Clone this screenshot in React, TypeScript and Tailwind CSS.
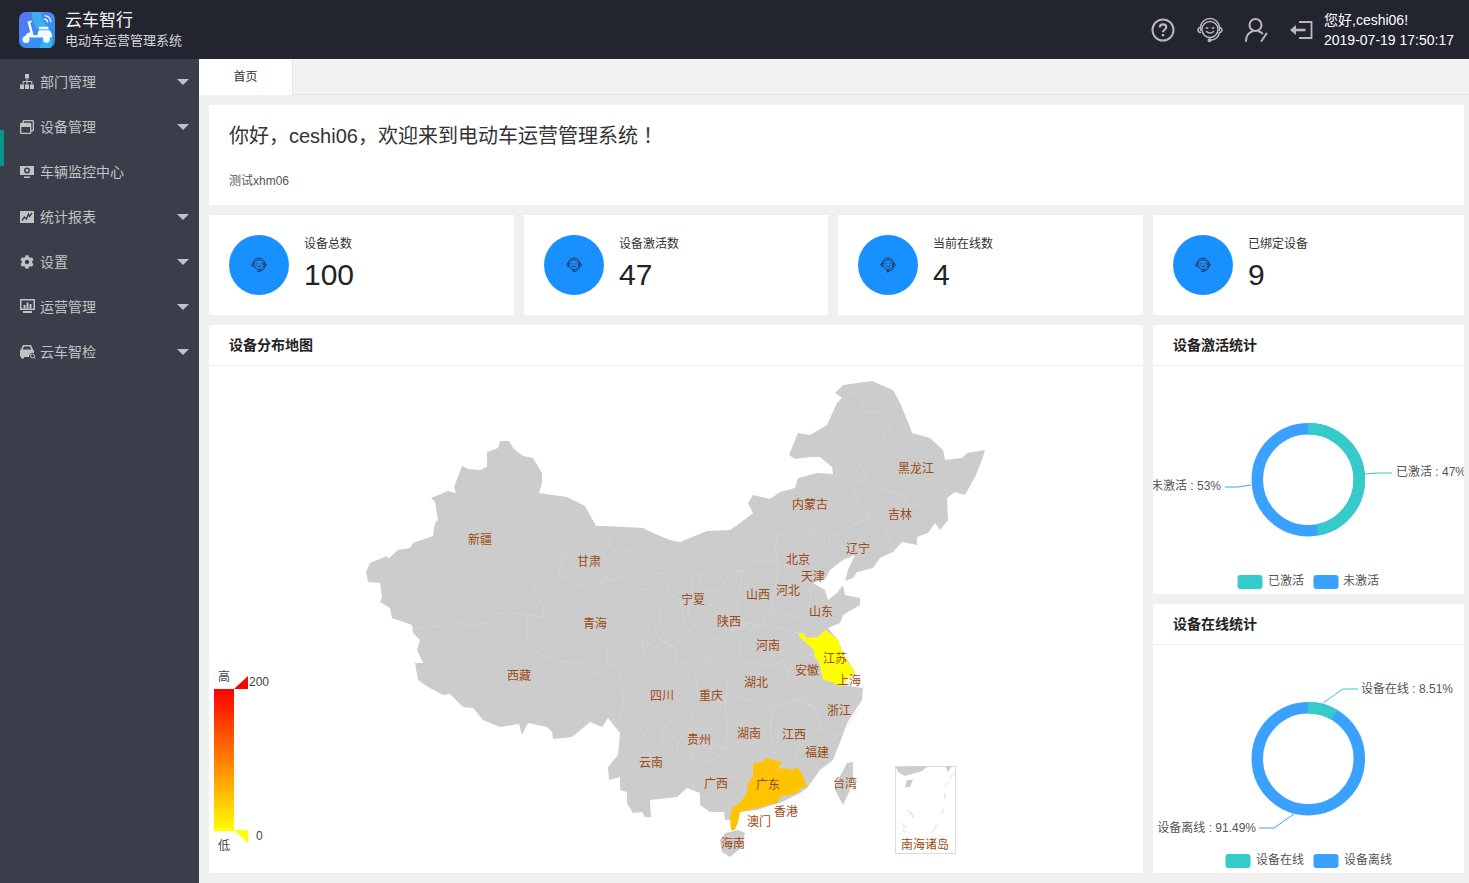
import { FaCog, FaRegWindowRestore } from 'react-icons/fa';
import type { ReactNode } from 'react';

// ---------- icons ----------
function HeadsetIcon({ className }: { className?: string }) {
  return (
    <svg className={className} viewBox="0 0 26 26" fill="none" stroke="currentColor" strokeWidth="1.5" strokeLinecap="round">
      <circle cx="13" cy="12.5" r="8" />
      <path d="M3.6 13.5V10.5C3.6 5.6 7.8 1.6 13 1.6s9.4 4 9.4 8.9v3" />
      <path d="M3.6 10.2c-1.7.3-2.6 1.4-2.6 2.7s1 2.4 2.6 2.6M22.4 10.2c1.7.3 2.6 1.4 2.6 2.7s-1 2.4-2.6 2.6" />
      <path d="M22.4 15.5c-.3 4.4-4 7.2-8 7.6" />
      <circle cx="12.6" cy="23.2" r="1.3" fill="currentColor" />
      <path d="M9.2 11h1.6M15.2 11h1.6M9.5 14.6c1.8 2 5.2 2 7 0" />
    </svg>
  );
}

function UserCheckIcon({ className }: { className?: string }) {
  return (
    <svg className={className} viewBox="0 0 24 26" fill="none" stroke="currentColor" strokeWidth="2" strokeLinecap="round">
      <circle cx="10.5" cy="8" r="6" />
      <path d="M1 24c0-5.500 3-8.500 6.500-9.800M13.500 14.300c1.500.5 2.800 1.200 3.800 2.200" />
      <path d="M16.500 24l5-7.500" />
    </svg>
  );
}

function LogoutIcon({ className }: { className?: string }) {
  return (
    <svg className={className} viewBox="0 0 24 20" fill="none" stroke="currentColor" strokeWidth="1.8">
      <path d="M10 2h12.500v16H10" />
      <path d="M1 10l6-5v10z" fill="currentColor" stroke="none" />
      <path d="M7 8.700h9.500v2.600H7z" fill="currentColor" stroke="none" />
    </svg>
  );
}

function Logo() {
  return (
    <svg className="w-9 h-9 shrink-0" viewBox="0 0 36 36">
      <defs>
        <linearGradient id="logoBg" x1="0" y1="0" x2="1" y2="1">
          <stop offset="0" stopColor="#5f6ef2" />
          <stop offset="0.6" stopColor="#3b8ff3" />
          <stop offset="1" stopColor="#2a86ea" />
        </linearGradient>
      </defs>
      <rect width="36" height="36" rx="7" fill="url(#logoBg)" />
      <path d="M13 0h10c-1 7 3 11 7 16 4 6 5 13 2 20H20c4-6 3-12-1-18C15 13 12 7 13 0z" fill="#38c0ee" opacity="0.7" />
      <path d="M8.500 9.500l4-1 .6 1.500-1.800.6 3.200 12.400 4 .2c.2-2 .6-3.600 1.500-5h10c2 1 3 3.300 3 6.500l-1.500.8H9.500c-1.500 0-2.800.4-4 1.500.2-3.500 2.200-6 5.700-6.700z" fill="#fff" opacity="0.95" />
      <rect x="20" y="14.800" width="9.500" height="2.400" rx="1.200" fill="#fff" />
      <circle cx="7" cy="27.500" r="3.500" fill="#fff" />
      <circle cx="27.500" cy="27.500" r="3.300" fill="#fff" />
      <path d="M25 6.800c2 .2 3.500 1.600 3.800 3.600M25.500 3.600c3.500.4 6 3 6.500 6.500" fill="none" stroke="#fff" strokeWidth="1.300" />
    </svg>
  );
}

function SitemapIcon() {
  return (
    <svg className="w-[14px] h-[15px]" viewBox="0 0 14 15" fill="#c2c2c2">
      <path d="M5 0h4v4.500H5zM0 10.500h4V15H0zM5 10.500h4V15H5zM10 10.500h4V15h-4z" />
      <path d="M6.500 4.500h1v2.500h4.800v3.500h-1V8H7.500v2.500h-1V8H3.700v2.500h-1V7h3.800z" />
    </svg>
  );
}

function ScreenCamIcon() {
  return (
    <svg className="w-[14px] h-[14px]" viewBox="0 0 14 14">
      <path d="M0 1h14v9H0z" fill="#c2c2c2" />
      <circle cx="7" cy="5.500" r="3" fill="#3a3e4b" />
      <circle cx="7" cy="5.500" r="1.400" fill="#c2c2c2" />
      <path d="M4 11.500h6V13H4z" fill="#c2c2c2" />
    </svg>
  );
}

function ReportIcon() {
  return (
    <svg className="w-[14px] h-[14px]" viewBox="0 0 14 14">
      <path d="M0 1h14v12H0z" fill="#c2c2c2" />
      <path d="M2 10.500l2.500-3.500 2 2 2-5 1 2.500L12 3" fill="none" stroke="#3a3e4b" strokeWidth="1.300" />
    </svg>
  );
}

function MonitorBarsIcon() {
  return (
    <svg className="w-[15px] h-[15px]" viewBox="0 0 15 15">
      <path d="M0 0h15v11H0z" fill="#c2c2c2" />
      <path d="M1.500 1.500h12v8h-12z" fill="#3a3e4b" />
      <path d="M3.500 6h2v3.500h-2zM6.500 3.500h2v6h-2zM9.500 5h2v4.500h-2z" fill="#c2c2c2" />
      <path d="M3 12h9v2H3z" fill="#c2c2c2" />
    </svg>
  );
}

function CarSearchIcon() {
  return (
    <svg className="w-4 h-[15px]" viewBox="0 0 16 15">
      <path d="M3 1h8l2 4.500c.8.3 1 1 1 1.800V9a4 4 0 0 0-5 4H4v1.500H1V13L0 12V7.300c0-.8.300-1.500 1-1.800z" fill="#c2c2c2" />
      <path d="M4 2.500h6l1.200 3H2.800z" fill="#3a3e4b" />
      <circle cx="12.500" cy="12" r="2" fill="none" stroke="#c2c2c2" strokeWidth="1" />
      <path d="M14 13.500l1.500 1.300" stroke="#c2c2c2" strokeWidth="1" />
    </svg>
  );
}

// ---------- sidebar ----------
interface MenuItem {
  label: string;
  icon: ReactNode;
  caret: boolean;
}

const menu: MenuItem[] = [
  { label: '部门管理', icon: <SitemapIcon />, caret: true },
  { label: '设备管理', icon: <FaRegWindowRestore className="w-[14px] h-[14px]" />, caret: true },
  { label: '车辆监控中心', icon: <ScreenCamIcon />, caret: false },
  { label: '统计报表', icon: <ReportIcon />, caret: true },
  { label: '设置', icon: <FaCog className="w-[14px] h-[14px]" />, caret: true },
  { label: '运营管理', icon: <MonitorBarsIcon />, caret: true },
  { label: '云车智检', icon: <CarSearchIcon />, caret: true },
];

function Sidebar() {
  return (
    <aside className="relative w-[199px] shrink-0 bg-[#3a3e4b] text-[#c2c2c2]">
      <div className="absolute left-0 top-[71px] w-1 h-9 bg-[#009688]" />
      {menu.map((item) => (
        <div key={item.label} className="flex items-center h-[45px] pl-[20px] pr-[10px] text-sm">
          <span className="w-[20px] flex items-center">{item.icon}</span>
          <span className="flex-1">{item.label}</span>
          {item.caret && (
            <span className="w-0 h-0 border-x-[6px] border-x-transparent border-t-[6px] border-t-[#c2c2c2]" />
          )}
        </div>
      ))}
    </aside>
  );
}

// ---------- stat cards ----------
function StatCard({ label, value, className }: { label: string; value: number; className: string }) {
  return (
    <div className={`flex items-center h-[100px] bg-white pl-5 ${className}`}>
      <div className="flex items-center justify-center w-[60px] h-[60px] rounded-full bg-[#1890ff] text-[#1c3557]">
        <HeadsetIcon className="w-4 h-4" />
      </div>
      <div className="ml-[15px] pb-[2px]">
        <div className="text-xs leading-4 text-[#333]">{label}</div>
        <div className="mt-[5px] text-[30px] leading-9 text-[#222]">{value}</div>
      </div>
    </div>
  );
}

function CardTitle({ children }: { children: ReactNode }) {
  return (
    <div className="flex items-center h-[41px] px-5 border-b border-[#f0f0f0] text-sm font-bold text-[#222]">
      {children}
    </div>
  );
}

// ---------- map ----------
const CHINA =
  '366,572 370,563 387,556 388,559 398,550 410,548 413,543 433,536 435,523 438,520 435,502 431,498 448,491 456,493 454,487 462,466 468,469 480,470 487,467 487,452 498,448 500,441 509,441 513,448 523,456 533,458 542,473 542,483 539,493 567,497 585,506 596,526 605,526 643,528 653,533 670,540 680,542 707,531 730,530 740,523 753,513 748,503 753,495 770,499 780,492 795,488 798,478 817,473 833,474 832,467 820,457 810,457 795,459 789,455 798,433 810,435 827,425 837,403 842,398 835,393 843,385 872,381 893,390 900,403 910,427 912,433 930,438 943,450 945,460 962,458 967,453 985,450 982,460 975,477 965,495 955,492 947,498 948,520 940,530 935,523 928,533 917,537 917,545 902,542 893,552 880,558 873,568 857,572 853,578 845,581 848,570 855,555 843,560 830,570 826,578 813,583 825,590 828,600 837,593 843,585 845,595 860,598 860,605 843,615 840,623 828,628 838,640 843,653 855,672 842,685 863,688 862,700 847,723 842,737 833,760 820,770 807,788 800,793 780,803 772,805 757,810 740,812 732,810 730,820 725,820 724,812 710,812 700,805 700,793 687,788 677,797 650,800 651,817 645,817 642,812 633,813 627,803 627,792 620,790 620,777 609,780 608,767 618,755 620,733 608,718 602,727 590,722 572,737 553,739 552,732 547,727 528,723 522,735 519,724 500,727 483,720 473,708 463,707 450,694 443,695 428,687 418,680 415,663 423,663 417,650 420,640 413,633 412,625 392,618 390,608 380,602 382,597 380,583 368,582';

const JIANGSU =
  '798,633 803,633 807,638 818,637 825,630 832,635 838,640 843,655 855,672 845,682 840,687 833,682 823,680 822,675 820,665 818,660 815,658 814,650 805,642 800,637';

const GUANGDONG =
  '755,763 763,762 765,758 782,762 777,770 782,768 792,770 797,767 803,775 807,788 800,788 798,793 780,797 777,803 772,804 757,808 740,812 738,822 735,830 731,830 730,818 732,808 740,803 747,793 748,783 753,777 753,765';

const BORDERS = [
  // west
  '412,630 433,626 448,627 457,622 473,626 490,622 495,615 505,612 527,615 542,617 544,607 533,587 558,575',
  '558,575 563,553 572,553 583,540 593,533 596,526',
  '605,527 611,542 607,545 617,552 633,550 635,557 628,567 642,573 645,580 652,582 653,574 673,572 675,578 667,587 668,593 680,600',
  '558,575 568,578 578,585 593,588 603,582 603,575 613,580 623,577 635,587 647,590 657,600 662,615 655,628 660,640 675,648',
  '527,617 527,640 538,653 563,662 582,663 588,673 600,673 607,663 607,643 617,643 622,653 640,662 645,653 642,640 655,647 663,641 675,648 677,662 693,662',
  '607,663 617,667 622,683 623,710 618,722 615,722',
  '625,715 628,715 640,727 650,748 662,747 663,730 673,717 677,723 687,728',
  '670,733 678,743 677,753 683,767 678,772 687,780 695,780 693,788',
  '698,690 687,703 693,713 690,720 700,727 690,734 695,745 690,755 695,762',
  // north east
  '852,385 848,393 860,397 865,412 883,412 890,407 895,417 887,430 880,450 860,465 867,478 853,483',
  '867,478 875,488 893,492 905,497 907,510 918,503 925,515 937,510 947,517',
  '853,483 857,503 867,507 870,518 883,523 893,550',
  '870,518 853,525 838,535 828,533 830,543 823,553 830,565',
  '817,540 813,530 797,533 778,535 775,547 778,562',
  '778,562 757,560 743,570 730,573 720,590 723,597 707,607 697,617 703,623',
  '743,570 738,597 737,613 747,630',
  '778,562 777,580 770,610 795,617 808,610 813,583',
  '693,577 702,573 698,587 703,590 720,590',
  '693,577 688,613 697,627',
  '770,610 762,625 748,632',
  // central
  '740,640 733,630 747,623 772,627 798,633',
  '741,662 740,640',
  '741,662 753,663 770,667 783,660 788,673 793,697 815,708',
  '788,673 800,657 815,654',
  '815,690 830,685',
  '725,703 740,697 773,707 803,698 815,708 822,730 840,735 860,708',
  '823,727 807,735 797,753 793,767',
  '773,707 770,730 773,747 778,760',
  '725,703 727,723 728,747 717,757 707,763 690,753',
  '725,703 728,680 741,670',
  '725,703 707,700 695,690',
  '700,727 707,745 728,748',
  '693,788 712,770 728,775 745,783',
  '715,640 705,660 695,672 698,690',
  '705,660 728,668',
  '680,600 685,625 697,640 715,640 733,630',
];

const PROVINCE_LABELS: [string, number, number][] = [
  ['黑龙江', 916, 469], ['内蒙古', 810, 505], ['吉林', 900, 515], ['新疆', 480, 540], ['辽宁', 858, 549],
  ['甘肃', 589, 562], ['北京', 798, 560], ['天津', 813, 577], ['河北', 788, 591], ['山西', 758, 595],
  ['宁夏', 693, 600], ['山东', 821, 612], ['陕西', 729, 622], ['青海', 595, 624], ['河南', 768, 646],
  ['江苏', 835, 659], ['安徽', 807, 671], ['西藏', 519, 676], ['上海', 849, 681], ['四川', 662, 696],
  ['重庆', 711, 696], ['湖北', 756, 683], ['浙江', 839, 711], ['湖南', 749, 734], ['江西', 794, 735],
  ['贵州', 699, 740], ['福建', 817, 753], ['云南', 651, 763], ['广西', 716, 784], ['广东', 768, 785],
  ['台湾', 845, 784], ['香港', 786, 812], ['澳门', 759, 822], ['海南', 733, 844], ['南海诸岛', 925, 845],
];

function ChinaMap() {
  return (
    <svg className="block w-full h-[507px]" viewBox="209 366 934 507">
      <defs>
        <linearGradient id="rangeBar" x1="0" y1="0" x2="0" y2="1">
          <stop offset="0" stopColor="#ff0000" />
          <stop offset="1" stopColor="#ffff00" />
        </linearGradient>
      </defs>

      {/* legend */}
      <rect x="214" y="689" width="20" height="142" fill="url(#rangeBar)" />
      <polygon points="234,689 248,676 248,689" fill="#ff0000" />
      <polygon points="234,830 248,830 248,843" fill="#ffff00" />
      <g fontSize="12" fill="#444" dominantBaseline="central">
        <text x="224" y="677" textAnchor="middle">高</text>
        <text x="224" y="846" textAnchor="middle">低</text>
        <text x="249" y="682">200</text>
        <text x="256" y="836">0</text>
      </g>

      {/* land */}
      <polygon points={CHINA} fill="#cccccc" />
      <polygon points="853,762 847,763 838,780 835,790 843,805 850,790 853,777" fill="#cccccc" />
      <polygon points="725,833 738,830 745,833 742,847 730,857 722,852 720,840" fill="#cccccc" />
      {BORDERS.map((b) => (
        <polyline key={b} points={b} fill="none" stroke="#d8d8d8" strokeWidth="0.6" />
      ))}
      <polygon points={JIANGSU} fill="#ffff00" />
      <polygon points={GUANGDONG} fill="#ffc300" />

      {/* south china sea inset */}
      <rect x="895.500" y="766.500" width="60" height="87" fill="none" stroke="#dddddd" />
      <polygon points="896,767 928,766 922,771 905,776 898,772" fill="#cccccc" />
      <polygon points="945,766 952,766 948,772" fill="#cccccc" />
      <polygon points="907,780 913,780 910,787 905,787" fill="#cccccc" />
      <g stroke="#dddddd" strokeWidth="1">
        <path d="M955,772L950,778M948,783L945,787M945,793V799M944,809L941,814M937,825L932,833M911,815L907,809M911,811L913,818M906,829L902,823M905,833L903,829" fill="none" />
      </g>

      {PROVINCE_LABELS.map(([name, x, y]) => (
        <text key={name} x={x} y={y} fontSize="12" fill="#9c4a12" textAnchor="middle" dominantBaseline="central">
          {name}
        </text>
      ))}
    </svg>
  );
}

// ---------- donut charts ----------
const TEAL = '#36cbcb';
const BLUE = '#3aa1ff';

function Donut({ cy, percent }: { cy: number; percent: number }) {
  const r = 51;
  const c = 2 * Math.PI * r;
  return (
    <g transform={`rotate(-90 1308.300 ${cy})`}>
      <circle cx="1308.300" cy={cy} r={r} fill="none" stroke={BLUE} strokeWidth="11.500" />
      <circle
        cx="1308.300"
        cy={cy}
        r={r}
        fill="none"
        stroke={TEAL}
        strokeWidth="11.500"
        strokeDasharray={`${(c * percent) / 100} ${c}`}
      />
    </g>
  );
}

function ActivationChart() {
  return (
    <svg className="block w-full h-[228px]" viewBox="1153 366 311 228">
      <Donut cy={479.7} percent={47} />
      <polyline points="1365,474 1378,473 1392,473" fill="none" stroke={TEAL} />
      <polyline points="1251,485 1238,487 1225,487" fill="none" stroke={BLUE} />
      <g fontSize="12" fill="#555" dominantBaseline="central">
        <text x="1396" y="472">已激活 : 47%</text>
        <text x="1221" y="486" textAnchor="end">未激活 : 53%</text>
        <text x="1268" y="581">已激活</text>
        <text x="1343" y="581">未激活</text>
      </g>
      <rect x="1237.500" y="575" width="25" height="14" rx="3" fill={TEAL} />
      <rect x="1313.500" y="575" width="25" height="14" rx="3" fill={BLUE} />
    </svg>
  );
}

function OnlineChart() {
  return (
    <svg className="block w-full h-[228px]" viewBox="1153 645 311 228">
      <Donut cy={758.7} percent={8.51} />
      <polyline points="1323,703 1343,689 1358,689" fill="none" stroke={TEAL} />
      <polyline points="1294,814 1274,828 1259,828" fill="none" stroke={BLUE} />
      <g fontSize="12" fill="#555" dominantBaseline="central">
        <text x="1361" y="689">设备在线 : 8.51%</text>
        <text x="1256" y="828" textAnchor="end">设备离线 : 91.49%</text>
        <text x="1256" y="860">设备在线</text>
        <text x="1344" y="860">设备离线</text>
      </g>
      <rect x="1225.500" y="854" width="25" height="14" rx="3" fill={TEAL} />
      <rect x="1313.500" y="854" width="25" height="14" rx="3" fill={BLUE} />
    </svg>
  );
}

export default function App() {
  return (
    <div className="flex flex-col w-[1469px] h-[883px] overflow-hidden bg-[#f0f0f0] font-['Liberation_Sans','Noto_Sans_CJK_SC',sans-serif]">
      {/* Header */}
      <header className="flex items-center h-[59px] shrink-0 pl-[19px] pr-[15px] bg-[#22252f] text-white">
        <Logo />
        <div className="ml-[10px]">
          <div className="text-[17px] leading-[20px] text-[#f2f2f2]">云车智行</div>
          <div className="mt-[2px] text-[13px] leading-[16px] text-[#d6d6d6]">电动车运营管理系统</div>
        </div>
        <div className="flex items-center ml-auto text-[#b8b8b8]">
          <svg className="w-6 h-6" viewBox="0 0 24 24" fill="none" stroke="currentColor" strokeWidth="2">
            <circle cx="12" cy="12" r="10.500" />
            <path d="M8.800 9.500c0-1.900 1.400-3.200 3.200-3.200s3.200 1.100 3.200 2.900c0 2.500-3.200 2.600-3.200 5" strokeWidth="2.200" />
            <path d="M12 16v2.200" strokeWidth="2.400" />
          </svg>
          <HeadsetIcon className="w-[26px] h-[26px] ml-[22px]" />
          <UserCheckIcon className="w-6 h-[26px] ml-[22px]" />
          <LogoutIcon className="w-6 h-5 ml-5" />
          <div className="ml-[11px] text-sm leading-5 text-white">
            <div>您好,ceshi06!</div>
            <div>2019-07-19 17:50:17</div>
          </div>
        </div>
      </header>

      <div className="flex flex-1 min-h-0">
        <Sidebar />
        <main className="flex-1 min-w-0">
          {/* Tabs */}
          <div className="flex h-9 bg-[#f2f2f2] border-b border-[#e6e6e6]">
            <div className="flex items-center justify-center w-[94px] h-9 bg-white border-r border-[#e6e6e6] text-xs text-[#333]">
              首页
            </div>
          </div>

          <div className="flex flex-col gap-[10px] pt-[10px] pl-[10px] pr-[5px]">
            <section className="h-[100px] bg-white pl-5 pt-[15px]">
              <div className="text-xl leading-[30px] text-[#333]">
                你好，ceshi06，欢迎来到电动车运营管理系统
                <span className="font-['Noto_Sans_CJK_TC',sans-serif]">！</span>
              </div>
              <div className="mt-[22px] text-xs leading-4 text-[#555]">测试xhm06</div>
            </section>

            <div className="flex gap-[10px]">
              <StatCard label="设备总数" value={100} className="w-[305px]" />
              <StatCard label="设备激活数" value={47} className="w-[304px]" />
              <StatCard label="当前在线数" value={4} className="w-[305px]" />
              <StatCard label="已绑定设备" value={9} className="w-[311px]" />
            </div>

            <div className="flex gap-[10px]">
              <section className="w-[934px] h-[548px] bg-white">
                <CardTitle>设备分布地图</CardTitle>
                <ChinaMap />
              </section>
              <div className="flex flex-col gap-[10px] w-[311px]">
                <section className="h-[269px] bg-white">
                  <CardTitle>设备激活统计</CardTitle>
                  <ActivationChart />
                </section>
                <section className="h-[269px] bg-white">
                  <CardTitle>设备在线统计</CardTitle>
                  <OnlineChart />
                </section>
              </div>
            </div>
          </div>
        </main>
      </div>
    </div>
  );
}
